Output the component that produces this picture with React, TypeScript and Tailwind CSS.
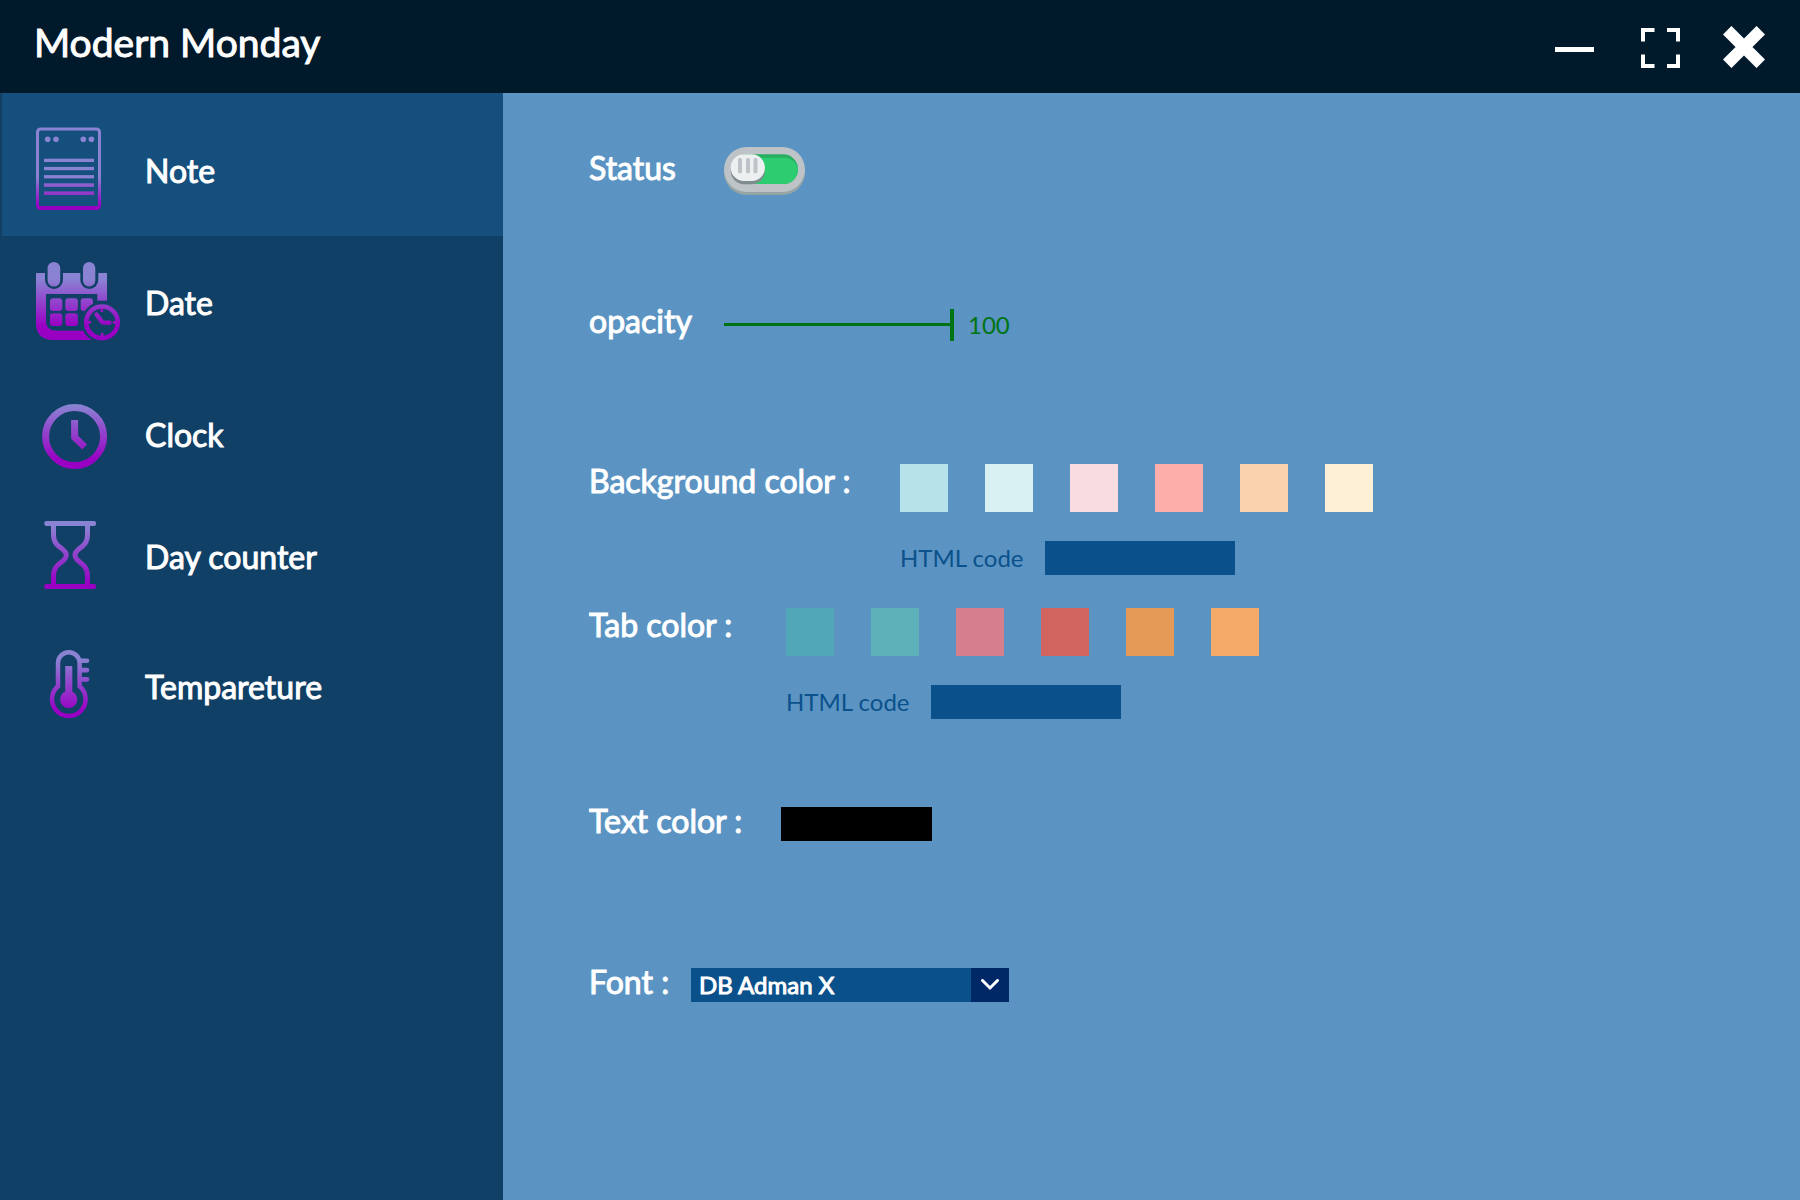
import { useState } from "react";
import type { ReactNode } from "react";

const FROM = "#8a82d3";
const TO = "#9a00c4";

function Fade({ id, y1, y2 }: { id: string; y1: number; y2: number }) {
  return (
    <linearGradient id={id} gradientUnits="userSpaceOnUse" x1="0" x2="0" y1={y1} y2={y2}>
      <stop offset="0" stopColor={FROM} />
      <stop offset="1" stopColor={TO} />
    </linearGradient>
  );
}

function IconBox({ children }: { children: ReactNode }) {
  return (
    <svg viewBox="0 0 84 84" className="size-[84px] shrink-0" fill="none" aria-hidden="true">
      {children}
    </svg>
  );
}

function NoteIcon() {
  return (
    <IconBox>
      <defs><Fade id="g-note" y1={50} y2={79} /></defs>
      <rect x="1.5" y="2" width="62" height="79.5" rx="3" stroke="url(#g-note)" strokeWidth="3" />
      <g fill="url(#g-note)">
        <rect x="2" y="79" width="61" height="3" />
        <circle cx="11.7" cy="12.3" r="2.8" />
        <circle cx="20" cy="12.3" r="2.8" />
        <circle cx="47.3" cy="12.3" r="2.8" />
        <circle cx="55.4" cy="12.3" r="2.8" />
        <rect x="8" y="31.7" width="50" height="3.3" />
        <rect x="8" y="39.9" width="50" height="3.3" />
        <rect x="8" y="48.1" width="50" height="3.3" />
        <rect x="8" y="56.3" width="50" height="3.6" />
        <rect x="8" y="64.4" width="50" height="3.6" />
      </g>
    </IconBox>
  );
}

function DateIcon() {
  return (
    <IconBox>
      <defs>
        <Fade id="g-date" y1={20} y2={67} />
        <mask id="m-date" maskUnits="userSpaceOnUse" x="0" y="0" width="84" height="84">
          <rect width="84" height="84" fill="white" />
          <rect x="9" y="-2" width="18" height="32" rx="9" fill="black" />
          <rect x="44.3" y="-2" width="18" height="32" rx="9" fill="black" />
          <path d="M10 35H61.3V71.7H20Q10 71.7 10 62Z" fill="black" />
          <rect x="61" y="41.7" width="23" height="43" fill="black" />
          <circle cx="66" cy="63.3" r="20.5" fill="black" />
        </mask>
        <mask id="m-cells" maskUnits="userSpaceOnUse" x="0" y="0" width="84" height="84">
          <rect width="84" height="84" fill="white" />
          <circle cx="66" cy="63.3" r="20.5" fill="black" />
        </mask>
      </defs>
      <g fill="url(#g-date)">
        <path mask="url(#m-date)" d="M0 14H71V81H16Q0 80 0 64Z" />
        <rect x="11.6" y="3" width="12.6" height="24.6" rx="6.3" />
        <rect x="47" y="3" width="12.3" height="24.6" rx="6.1" />
        <g mask="url(#m-cells)">
          <rect x="14" y="39.3" width="12.3" height="12.6" rx="3" />
          <rect x="29.3" y="39.3" width="12.6" height="12.6" rx="3" />
          <rect x="44.7" y="39.3" width="12.3" height="12.6" rx="3" />
          <rect x="14" y="54.3" width="12.3" height="12.6" rx="3" />
          <rect x="29.3" y="54.3" width="12.6" height="12.6" rx="3" />
        </g>
      </g>
      <circle cx="66" cy="63.3" r="15.8" stroke="url(#g-date)" strokeWidth="4.6" />
      <path
        d="M65.9 49V53M66.1 74V78M51.5 63.2H55M77 63.4H80.5"
        stroke="#9f0fc6"
        strokeWidth="2.6"
      />
      <path
        d="M60.5 55.5L66.5 63.4L73.5 63.7"
        stroke="url(#g-date)"
        strokeWidth="4.4"
        strokeLinecap="round"
        strokeLinejoin="round"
      />
    </IconBox>
  );
}

function ClockIcon() {
  return (
    <IconBox>
      <defs><Fade id="g-clock" y1={15} y2={69} /></defs>
      <g stroke="url(#g-clock)" strokeWidth="7">
        <circle cx="38.6" cy="45.6" r="29" />
        <path d="M38.6 29V46.3L48.7 56" />
      </g>
    </IconBox>
  );
}

function HourglassIcon() {
  return (
    <IconBox>
      <defs><Fade id="g-glass" y1={13} y2={70} /></defs>
      <g fill="url(#g-glass)">
        <rect x="8.3" y="8" width="51.7" height="5" rx="2" />
        <rect x="8.3" y="71" width="51.7" height="5" rx="2" />
      </g>
      <path
        d="M17.5 12V22C17.5 35 30.3 35 30.3 42C30.3 50 17.5 49 17.5 63V72M51.5 12V22C51.5 35 39 35 39 42C39 50 51.5 49 51.5 63V72"
        stroke="url(#g-glass)"
        strokeWidth="5"
      />
    </IconBox>
  );
}

function ThermometerIcon() {
  return (
    <IconBox>
      <defs><Fade id="g-temp" y1={16} y2={68} /></defs>
      <path
        d="M22 43.3V20A10.8 10.8 0 0 1 43.6 20V43.3A16.8 16.8 0 1 1 22 43.3Z"
        stroke="url(#g-temp)"
        strokeWidth="4.5"
      />
      <g fill="url(#g-temp)">
        <path d="M43 15.4H51A2 2 0 0 1 51 20H43Z" />
        <path d="M43 24.8H51A2 2 0 0 1 51 29.4H43Z" />
        <path d="M43 34.1H51A2 2 0 0 1 51 38.7H43Z" />
        <rect x="29.2" y="23" width="7.1" height="30" />
        <circle cx="32.7" cy="56.3" r="8.6" />
      </g>
    </IconBox>
  );
}

const items = [
  { name: "Note", icon: <NoteIcon />, box: "ml-0.5 pl-[34px] h-[143px] pt-[9px]" },
  { name: "Date", icon: <DateIcon />, box: "pl-9 h-24 mt-[17px]" },
  { name: "Clock", icon: <ClockIcon />, box: "pl-9 h-24 mt-9" },
  { name: "Day counter", icon: <HourglassIcon />, box: "pl-9 h-24 mt-[26px]" },
  { name: "Tempareture", icon: <ThermometerIcon />, box: "pl-9 h-24 mt-[34px]" },
];

function TitleBar() {
  return (
    <header className="flex h-[93px] items-center justify-between bg-[#00192b] pr-[35px] pl-[34px]">
      <h1 className="pb-2.5 text-[39px] leading-[48px] [-webkit-text-stroke:1px_white]">Modern Monday</h1>
      <div className="flex gap-[43px]">
        <button type="button" aria-label="Minimize">
          <svg viewBox="0 0 42 42" className="size-[42px]" fill="white"><rect x="2" y="21" width="39" height="5" /></svg>
        </button>
        <button type="button" aria-label="Maximize">
          <svg viewBox="0 0 42 42" className="size-[42px]" fill="none" stroke="white" strokeWidth="4">
            <path d="M16.5 4H5V15.5M29 4H40V15.5M5 28.5V40H16.5M40 28.5V40H29" />
          </svg>
        </button>
        <button type="button" aria-label="Close">
          <svg viewBox="0 0 42 42" className="size-[42px]" fill="none" stroke="white" strokeWidth="12">
            <path d="M4.2 4.2L37.8 37.8M37.8 4.2L4.2 37.8" />
          </svg>
        </button>
      </div>
    </header>
  );
}

function Sidebar({ active, onSelect }: { active: string; onSelect: (name: string) => void }) {
  return (
    <nav className="flex w-[503px] shrink-0 flex-col bg-[#114066]">
      {items.map((item) => (
        <button
          key={item.name}
          type="button"
          onClick={() => onSelect(item.name)}
          aria-current={active === item.name ? "page" : undefined}
          className={`flex items-center gap-[25px] text-left text-[32px] leading-10 [-webkit-text-stroke:1px_white] ${item.box} ${
            active === item.name ? "bg-[#144f7d]" : ""
          }`}
        >
          {item.icon}
          <span className="pt-1">{item.name}</span>
        </button>
      ))}
    </nav>
  );
}

const backgroundColors = ["bg-[#b7e2e9]", "bg-[#d9f1f3]", "bg-[#f9dce2]", "bg-[#fdaeab]", "bg-[#fad2ae]", "bg-[#fdf0d7]"];
const tabColors = ["bg-[#51a7b8]", "bg-[#5db2ba]", "bg-[#d57f8e]", "bg-[#d26460]", "bg-[#e59b57]", "bg-[#f4aa69]"];

function ColorField({ id, title, colors, width }: { id: string; title: string; colors: string[]; width: string }) {
  return (
    <div role="group" aria-labelledby={id} className="flex items-start">
      <span id={id} className={`shrink-0 text-[32px] leading-[34px] [-webkit-text-stroke:1px_white] ${width}`}>
        {title}
      </span>
      <div>
        <div className="flex gap-[37px]">
          {colors.map((color, i) => (
            <button key={color} type="button" aria-label={`${title} ${i + 1}`} className={`size-12 ${color}`} />
          ))}
        </div>
        <label className="mt-[29px] flex h-[34px] items-center gap-5 text-2xl text-[#0b518b]">
          <span className="w-[125px] whitespace-nowrap">HTML code</span>
          <input type="text" className="h-[34px] w-[190px] bg-[#0a508a] px-2 text-white outline-none" />
        </label>
      </div>
    </div>
  );
}

function StatusSwitch() {
  return (
    <label className="cursor-pointer">
      <input id="status" type="checkbox" role="switch" defaultChecked className="sr-only" />
      <svg viewBox="0 0 81 48" className="h-12 w-[81px]" aria-hidden="true">
        <rect y="3" width="81" height="45" rx="22.5" fill="#95a5a6" />
        <rect width="81" height="45" rx="22.5" fill="#bdc3c7" />
        <rect x="7" y="7.3" width="67" height="29.7" rx="14.8" fill="#27ae60" />
        <path d="M22 10.8H60C68 10.8 73 16 74 22.5C74 31 67.5 37 59.5 37H22Z" fill="#2ecc71" />
        <rect x="6.7" y="10.3" width="34.3" height="27" rx="13.5" fill="#7f8c8d" />
        <rect x="6.7" y="7.3" width="34.3" height="26.7" rx="13.3" fill="#ecf0f1" />
        <g fill="#bdc3c7">
          <rect x="14" y="11" width="4" height="15.3" rx="1.5" />
          <rect x="22" y="11" width="4" height="15.3" rx="1.5" />
          <rect x="29.5" y="11" width="4" height="15.3" rx="1.5" />
        </g>
      </svg>
    </label>
  );
}

function Settings() {
  const [opacity, setOpacity] = useState(100);
  const label = "shrink-0 pb-1.5 text-[32px] leading-8 [-webkit-text-stroke:1px_white]";
  return (
    <main className="flex-1 bg-[#5b94c3] pt-[54px] pb-12 pl-[86px]">
      <div className="flex h-12 items-center">
        <label htmlFor="status" className={`${label} w-[135px]`}>Status</label>
        <StatusSwitch />
      </div>

      <div className="mt-[113px] flex h-8 items-center">
        <label htmlFor="opacity" className={`${label} w-[135px]`}>opacity</label>
        <input
          id="opacity"
          type="range"
          min={0}
          max={100}
          value={opacity}
          onChange={(e) => setOpacity(Number(e.target.value))}
          className="h-8 w-[230px] appearance-none bg-transparent [&::-webkit-slider-runnable-track]:h-[3px] [&::-webkit-slider-runnable-track]:bg-[#007312] [&::-webkit-slider-thumb]:-mt-3.5 [&::-webkit-slider-thumb]:h-8 [&::-webkit-slider-thumb]:w-1 [&::-webkit-slider-thumb]:appearance-none [&::-webkit-slider-thumb]:bg-[#007312]"
        />
        <output htmlFor="opacity" className="ml-3.5 pt-0.5 text-2xl text-[#007312]">{opacity}</output>
      </div>

      <div className="mt-[124px]">
        <ColorField id="bg-color" title="Background color :" colors={backgroundColors} width="w-[311px]" />
      </div>

      <div className="mt-[33px]">
        <ColorField id="tab-color" title="Tab color :" colors={tabColors} width="w-[197px]" />
      </div>

      <div className="mt-[88px] flex h-[34px] items-center">
        <label htmlFor="text-color" className={`${label} w-48`}>Text color :</label>
        <input
          id="text-color"
          type="color"
          defaultValue="#000000"
          className="h-[34px] w-[151px] appearance-none bg-black p-0 [&::-webkit-color-swatch]:border-0 [&::-webkit-color-swatch-wrapper]:p-0"
        />
      </div>

      <div className="mt-[127px] flex h-[34px] items-center">
        <label htmlFor="font" className={`${label} w-[102px]`}>Font :</label>
        <div className="relative h-[34px] w-[318px]">
          <select
            id="font"
            className="h-[34px] w-full appearance-none bg-[#0a508a] pr-10 pl-2 text-2xl text-white outline-none [-webkit-text-stroke:1px_white]"
          >
            <option>DB Adman X</option>
          </select>
          <span className="pointer-events-none absolute inset-y-0 right-0 flex w-[38px] items-center justify-center bg-[#002766]">
            <svg viewBox="0 0 18 12" className="h-3 w-[18px]" fill="none" stroke="white" strokeWidth="3" aria-hidden="true">
              <path d="M1.5 1.5L9 9L16.5 1.5" strokeLinecap="round" />
            </svg>
          </span>
        </div>
      </div>
    </main>
  );
}

export default function App() {
  const [active, setActive] = useState("Note");
  return (
    <div className="flex min-h-screen flex-col font-['Lato',sans-serif] text-white">
      <TitleBar />
      <div className="flex flex-1">
        <Sidebar active={active} onSelect={setActive} />
        <Settings />
      </div>
    </div>
  );
}
